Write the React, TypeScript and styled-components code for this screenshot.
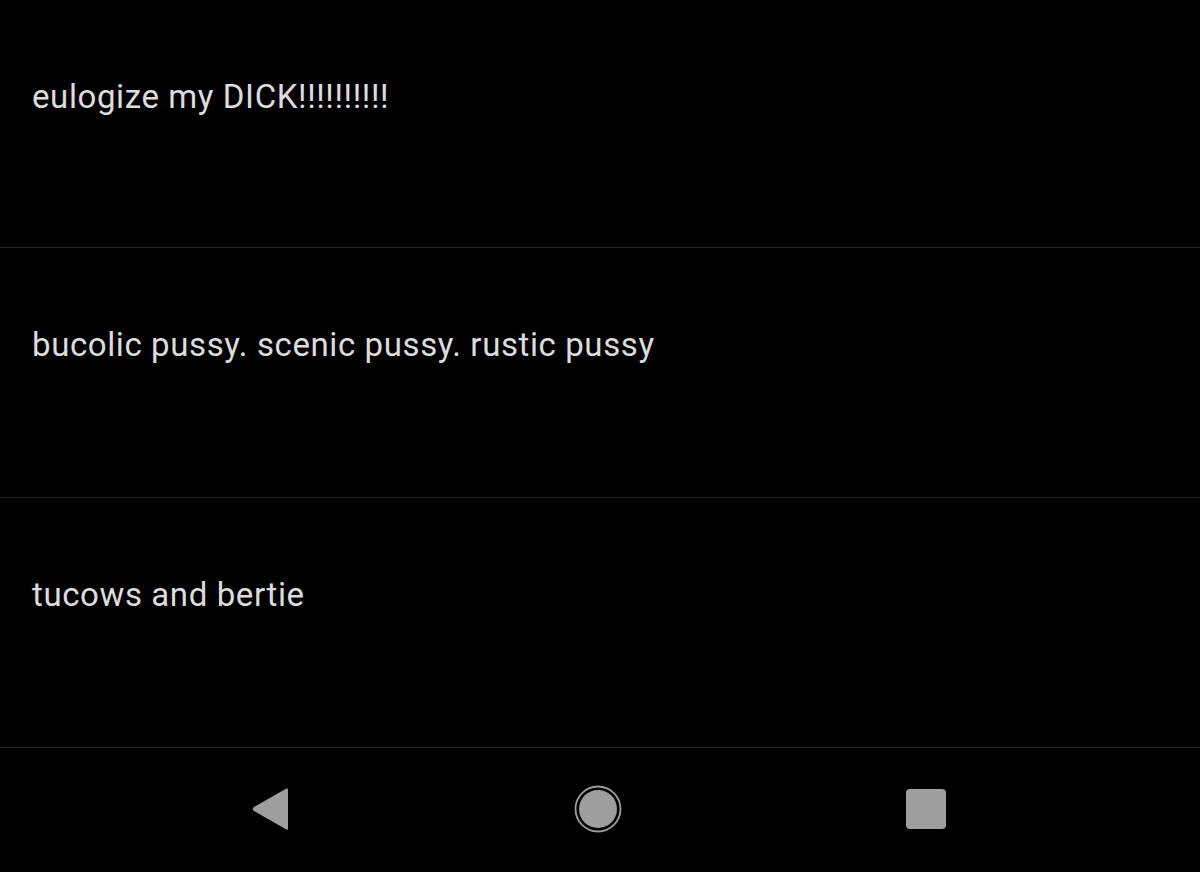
import React from "react";
import styled, { createGlobalStyle } from "styled-components";

const Global = createGlobalStyle`
  html, body {
    margin: 0;
    padding: 0;
    background: #000;
  }
  body {
    font-family: Roboto, "Noto Sans", sans-serif;
  }
`;

const Screen = styled.div`
  width: 1200px;
  height: 872px;
  background: #000;
  display: flex;
  flex-direction: column;
  overflow: hidden;
`;

const List = styled.div`
  flex: 1;
  display: flex;
  flex-direction: column;
`;

const Row = styled.div`
  height: 250px;
  box-sizing: border-box;
  border-bottom: 1px solid #262626;
  padding: 77px 32px 0;
  color: #dcdcdc;
  font-size: 33px;
  line-height: 40px;
  letter-spacing: 0.6px;
  &:first-child {
    height: 248px;
    padding-top: 77px;
  }
`;

const NavBar = styled.div`
  height: 124px;
  display: flex;
  align-items: center;
  justify-content: space-between;
  padding: 0 250px 0 246px;
`;

const NavButton = styled.div`
  width: 48px;
  height: 48px;
  display: flex;
  align-items: center;
  justify-content: center;
  margin-top: -2px;
`;

const items = [
  "eulogize my DICK!!!!!!!!!!",
  "bucolic pussy. scenic pussy. rustic pussy",
  "tucows and bertie",
];

export default function App() {
  return (
    <>
      <Global />
      <Screen>
        <List>
          {items.map((t) => (
            <Row key={t}>{t}</Row>
          ))}
        </List>
        <NavBar>
          <NavButton>
            <svg width="40" height="44" viewBox="0 0 40 44">
              <path
                d="M38 3 L38 41 Q38 44 35.5 42 L4 24 Q1.5 22 4 20 L35.5 2 Q38 0 38 3 Z"
                fill="#9e9e9e"
              />
            </svg>
          </NavButton>
          <NavButton>
            <svg width="48" height="48" viewBox="0 0 48 48">
              <circle cx="24" cy="24" r="22.5" fill="none" stroke="#9e9e9e" strokeWidth="1.8" />
              <circle cx="24" cy="24" r="19" fill="#9e9e9e" />
            </svg>
          </NavButton>
          <NavButton>
            <svg width="40" height="40" viewBox="0 0 40 40">
              <rect x="0" y="0" width="40" height="40" rx="4" fill="#9e9e9e" />
            </svg>
          </NavButton>
        </NavBar>
      </Screen>
    </>
  );
}
